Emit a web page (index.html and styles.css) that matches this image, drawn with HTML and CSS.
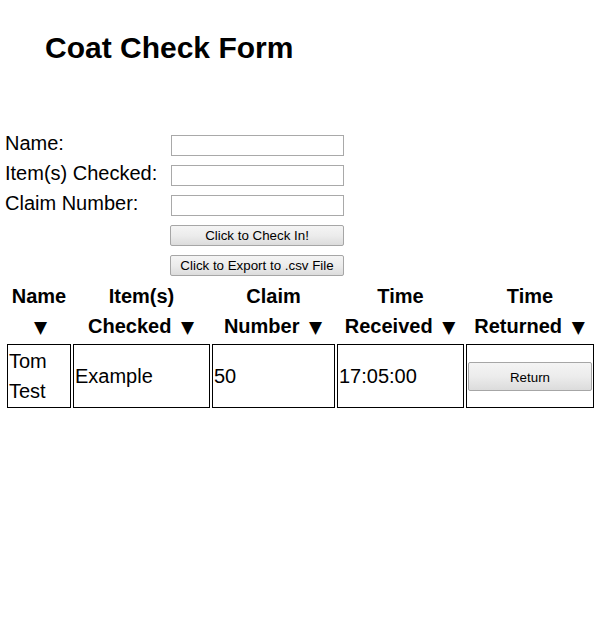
FILE: index.html
```html
<!DOCTYPE html>
<html>
<head>
<meta charset="utf-8">
<title>Coat Check Form</title>
<link rel="stylesheet" href="styles.css">
</head>
<body>
<div class="page">
  <h1 class="title">Coat Check Form</h1>
  <form class="form">
    <label class="label" for="name">Name:</label>
    <input class="field" id="name" type="text">
    <label class="label" for="items">Item(s) Checked:</label>
    <input class="field" id="items" type="text">
    <label class="label" for="claim">Claim Number:</label>
    <input class="field" id="claim" type="text">
    <span class="spacer"></span>
    <button class="btn form-btn" type="button">Click to Check In!</button>
    <span class="spacer"></span>
    <button class="btn form-btn" type="button">Click to Export to .csv File</button>
  </form>
  <table class="list">
    <colgroup>
      <col class="c1"><col class="c2"><col class="c3"><col class="c4"><col class="c5">
    </colgroup>
    <thead>
      <tr>
        <th>Name <span class="arrow">▼</span></th>
        <th>Item(s) Checked <span class="arrow">▼</span></th>
        <th>Claim Number <span class="arrow">▼</span></th>
        <th>Time Received <span class="arrow">▼</span></th>
        <th>Time Returned <span class="arrow">▼</span></th>
      </tr>
    </thead>
    <tbody>
      <tr>
        <td>Tom Test</td>
        <td>Example</td>
        <td>50</td>
        <td>17:05:00</td>
        <td><button class="btn return-btn" type="button">Return</button></td>
      </tr>
    </tbody>
  </table>
</div>
</body>
</html>
```

FILE: styles.css
```css
html, body {
  margin: 0;
  padding: 0;
  background: #ffffff;
}

.page {
  padding: 31px 0 0 5px;
  font-family: "Liberation Sans", Arial, sans-serif;
  color: #000000;
}

.title {
  margin: 0 0 63px 40px;
  font-size: 30px;
  line-height: 34px;
  font-weight: bold;
}

.form {
  display: grid;
  grid-template-columns: 166px 173px;
  grid-auto-rows: 30px;
  margin: 0;
}

.label {
  font-size: 20px;
  line-height: 30px;
  white-space: nowrap;
}

.field {
  box-sizing: border-box;
  width: 173px;
  height: 21px;
  margin: 7px 0 0 0;
  padding: 1px 2px;
  border: 1px solid #a9a9a9;
  background: #ffffff;
  font-family: "Liberation Sans", Arial, sans-serif;
  font-size: 13.33px;
  align-self: start;
}

.btn {
  box-sizing: border-box;
  border: 1px solid #a6a6a6;
  border-radius: 2px;
  background: linear-gradient(to bottom, #f4f4f4 0%, #ececec 50%, #dcdcdc 100%);
  font-family: "Liberation Sans", Arial, sans-serif;
  font-size: 13.33px;
  color: #000000;
  padding: 0 6px;
  cursor: default;
}

.form-btn {
  width: 174px;
  height: 21px;
  margin: 7px 0 0 -1px;
  align-self: start;
  line-height: 18px;
}

.list {
  table-layout: fixed;
  width: 591px;
  border-collapse: separate;
  border-spacing: 2px;
  font-size: 20px;
  line-height: 30px;
}

.c1 { width: 64px; }
.c2 { width: 137px; }
.c3 { width: 123px; }
.c4 { width: 127px; }
.c5 { width: 128px; }

.list th {
  padding: 1px;
  font-weight: bold;
  text-align: center;
  vertical-align: middle;
}

.arrow {
  font-family: "DejaVu Sans", sans-serif;
  font-size: 17px;
  font-weight: normal;
  line-height: 1;
  padding: 0 1px 0 4px;
}

.list td {
  padding: 1px;
  border: 1px solid #000000;
  text-align: left;
  vertical-align: middle;
}

.return-btn {
  display: block;
  width: 100%;
  height: 29px;
  margin: 0;
  padding-top: 3px;
  line-height: 24px;
}
```
